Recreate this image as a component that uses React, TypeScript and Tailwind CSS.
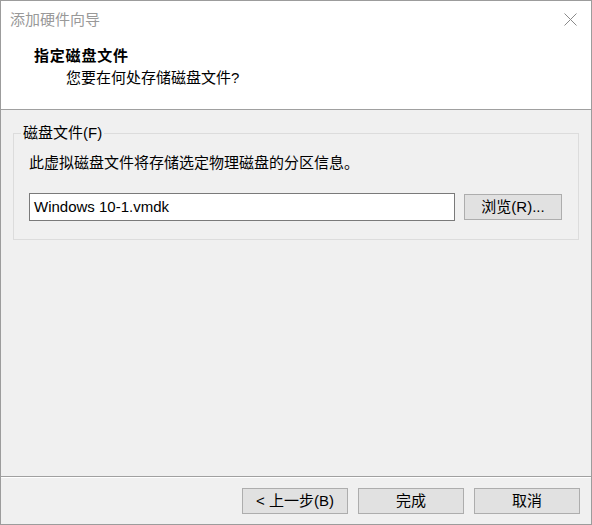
import React from "react";

const font = {
  fontFamily: '"Liberation Sans", "Noto Sans CJK SC", sans-serif',
};

function Btn({ children, w = "w-[106px]" }: { children: React.ReactNode; w?: string }) {
  return (
    <div
      className={`${w} h-[26px] border border-[#adadad] bg-[#e1e1e1] flex items-center justify-center text-[15px] leading-[20px] text-black`}
    >
      {children}
    </div>
  );
}

export default function App() {
  return (
    <div
      className="w-[592px] h-[525px] border border-[#9c9c9c] bg-[#f0f0f0] flex flex-col text-black overflow-hidden"
      style={font}
    >
      {/* header */}
      <div className="h-[109px] bg-white border-b border-[#a0a0a0] flex flex-col shrink-0">
        <div className="h-[38px] flex items-center justify-between pl-[9px] pr-[14px]">
          <span className="text-[15px] leading-[20px] text-[#999999]">添加硬件向导</span>
          <svg width="13" height="13" viewBox="0 0 13 13" className="-mt-[2px]">
            <path d="M0.5 0.5 L12.5 12.5 M12.5 0.5 L0.5 12.5" stroke="#8a8a8a" strokeWidth="1" fill="none" />
          </svg>
        </div>
        <div className="pl-[33px] mt-[7px] text-[15px] leading-[20px] font-bold tracking-[0.8px]">
          指定磁盘文件
        </div>
        <div className="pl-[65px] mt-[2px] text-[15px] leading-[20px]">您要在何处存储磁盘文件?</div>
      </div>

      {/* body */}
      <div className="flex-1 pt-[23px] pl-[12px] pr-[12px]">
        <div className="relative w-[566px] h-[107px] border border-[#dcdcdc] pl-[15px] pr-[15px]">
          <div className="absolute -top-[11px] left-[7px] px-[2px] bg-[#f0f0f0] text-[15px] leading-[20px]">
            磁盘文件(F)
          </div>
          <div className="pt-[19px] text-[15px] leading-[20px]">
            此虚拟磁盘文件将存储选定物理磁盘的分区信息。
          </div>
          <div className="mt-[20px] flex items-center gap-[9px]">
            <div className="w-[426px] h-[28px] border border-[#7a7a7a] bg-white flex items-center pl-[4px] text-[15px] leading-[20px]">
              Windows 10-1.vmdk
            </div>
            <Btn w="w-[98px]">
              <span className="h-[28px] flex items-center">浏览(R)...</span>
            </Btn>
          </div>
        </div>
      </div>

      {/* footer */}
      <div className="shrink-0 border-t border-[#a0a0a0]">
        <div className="border-t border-white h-[47px] flex items-center justify-end gap-[10px] pr-[11px]">
          <Btn>&lt; 上一步(B)</Btn>
          <Btn>完成</Btn>
          <Btn>取消</Btn>
        </div>
      </div>
    </div>
  );
}
